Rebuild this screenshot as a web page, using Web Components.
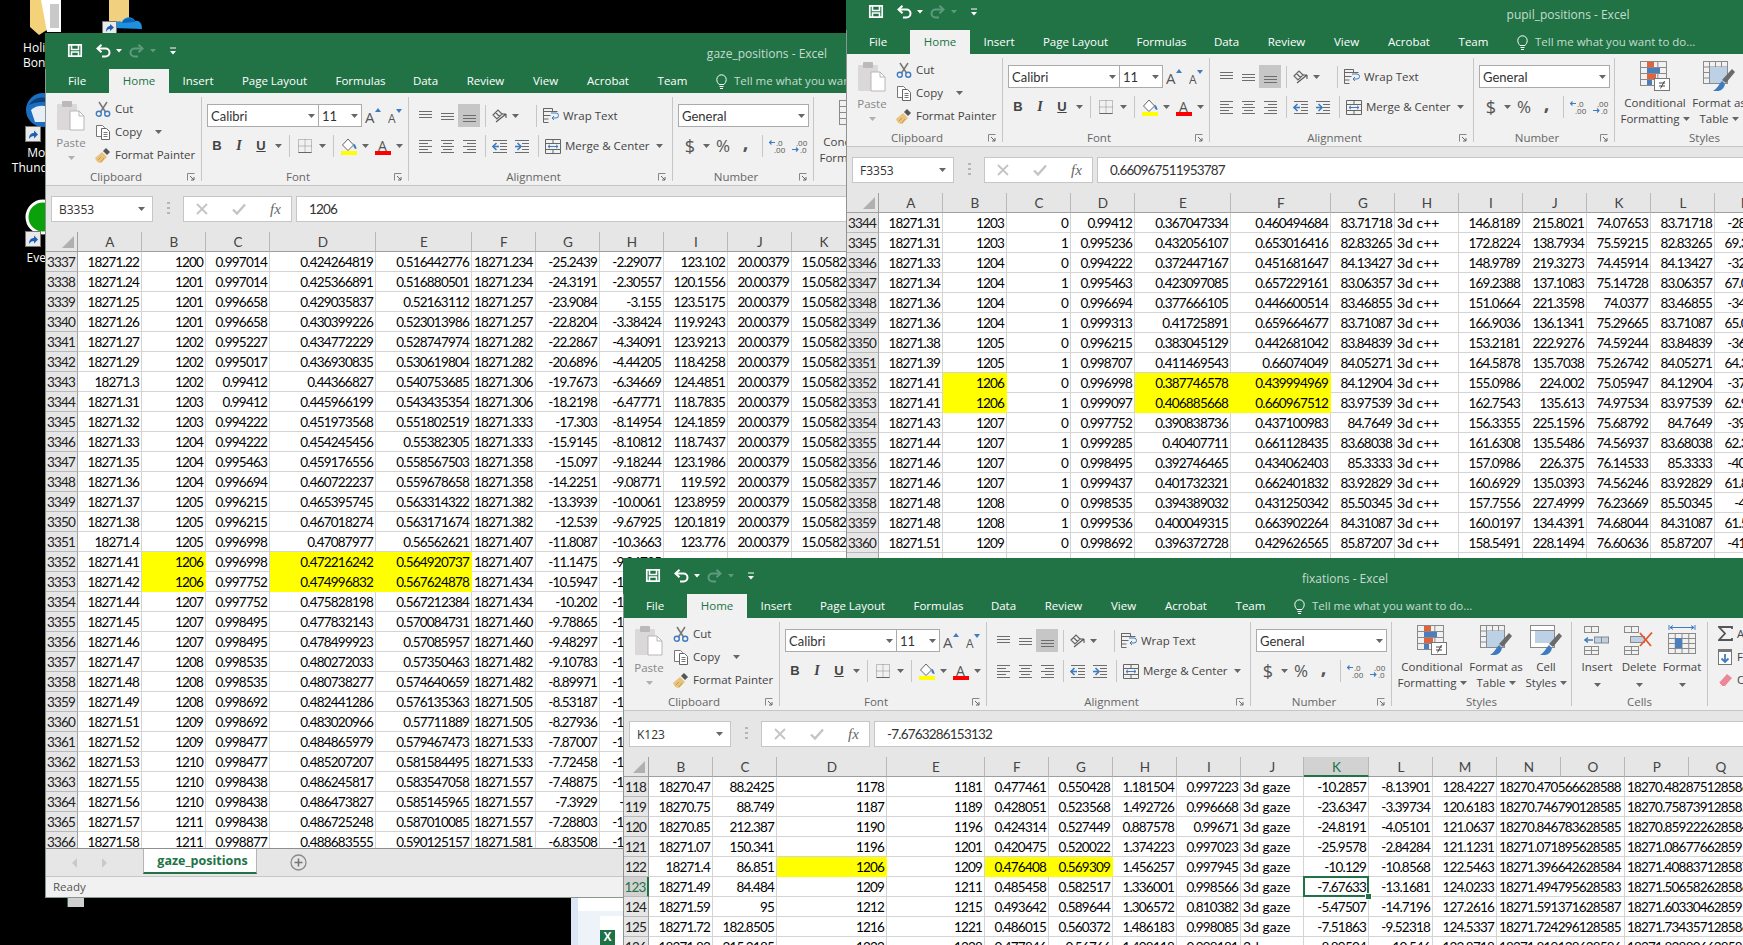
<!DOCTYPE html>
<html>
<head>
<meta charset="utf-8">
<title>Excel windows</title>
<style>
  html, body { margin: 0; height: 945px; overflow: hidden; background: #000; }
</style>
</head>
<body>
<desk-icon style="left:9px;top:0" kind="folder" label="Holidays|Bonuses"></desk-icon>
<desk-icon style="left:96px;top:0" kind="onedrive" label=""></desk-icon>
<desk-icon style="left:9px;top:93px" kind="bird" label="Mozilla|Thunderbird"></desk-icon>
<desk-icon style="left:9px;top:198px" kind="green" label="Everest"></desk-icon>
<desk-stub></desk-stub>
<desk-sliver></desk-sliver>

<xl-window style="left:45px;top:33px;height:865px" doc="gaze_positions" name="B3353" formula="1206" sheet-tab="gaze_positions">
  <xl-sheet slot="sheet" src="gaze"></xl-sheet>
</xl-window>
<xl-window style="left:846px;top:-6px;height:576px" doc="pupil_positions" name="F3353" formula="0.660967511953787">
  <xl-sheet slot="sheet" src="pupil"></xl-sheet>
</xl-window>
<xl-window style="left:623px;top:558px;height:400px" doc="fixations" name="K123" formula="-7.6763286153132">
  <xl-sheet slot="sheet" src="fix"></xl-sheet>
</xl-window>

<script>
const UI_FONT = `"Open Sans", "Noto Sans", sans-serif`
const CELL_FONT = `Lato, "Liberation Sans", sans-serif`
const GREY = '#6d6d6d'
const BLUE = '#3f7cbf'

const svg = (w, h, body) => `<svg width="${w}" height="${h}" viewBox="0 0 ${w} ${h}" fill="none">${body}</svg>`
const lines = (rows, x1, x2) => rows.map(r => `<path d="M${r[1] ?? x1} ${r[0]}H${r[2] ?? x2}" stroke="${GREY}"/>`).join('')
const grid = (x, y, w, h, nx, ny, c = '#8a8a8a') => {
  let s = `<rect x="${x + .5}" y="${y + .5}" width="${w}" height="${h}" stroke="${c}"/>`
  for (let i = 1; i < nx; i++) s += `<path d="M${x + .5 + i * w / nx} ${y}v${h}" stroke="${c}"/>`
  for (let i = 1; i < ny; i++) s += `<path d="M${x} ${y + .5 + i * h / ny}h${w}" stroke="${c}"/>`
  return s
}
const brush = `<path d="M29 8l3 3-9 11-4-3z" fill="#6a6a6a"/><path d="M19 20l3 3c-1 6-6 8-12 7 4-2 6-7 9-10z" fill="#3f7cbf"/>`

const ICONS = {
  save: svg(16, 15, `<path d="M1.8 1.8h12.4v11.4H1.8z" stroke="#fff" stroke-width="1.7"/><path d="M4.5 1.5v5h7v-5M4.5 13.5v-4.5h7v4.5" stroke="#fff" stroke-width="1.6"/>`),
  undo: svg(16, 14, `<path d="M3 4.5h7.5a4 4 0 0 1 0 8H7" stroke="#fff" stroke-width="2"/><path d="M6.5 .8L2.5 4.5l4 3.8" stroke="#fff" stroke-width="2"/>`),
  redo: svg(16, 14, `<path d="M13 4.5H5.5a4 4 0 0 0 0 8H9" stroke="#5f9a7c" stroke-width="2"/><path d="M9.5 .8l4 3.7-4 3.8" stroke="#5f9a7c" stroke-width="2"/>`),
  qat: svg(8, 8, `<path d="M1 1h6" stroke="#fff"/><path d="M1 4h6l-3 3.5z" fill="#fff"/>`),
  caretW: svg(7, 4, `<path d="M0 0h6l-3 3.5z" fill="#fff"/>`),
  caretD: svg(7, 4, `<path d="M0 0h6l-3 3.5z" fill="#5f9a7c"/>`),
  caret: svg(7, 4, `<path d="M0 0h7l-3.5 4z" fill="#666"/>`),
  caretL: svg(7, 4, `<path d="M0 0h7l-3.5 4z" fill="#b0b0b0"/>`),
  paste: svg(30, 31, `<rect x="1" y="4" width="20" height="26" rx="1" fill="#dad8d8"/><rect x="6" y="1" width="10" height="6" rx="1" fill="#bdb9b9"/><path d="M14 11h9l5 5v14H14z" fill="#fff" stroke="#b9b5b5"/><path d="M23 11v5h5" stroke="#b9b5b5"/>`),
  cut: svg(16, 16, `<path d="M4 1l6.5 10M12 1L5.5 11" stroke="#777" stroke-width="1.5"/><circle cx="3.8" cy="12.8" r="2.5" stroke="${BLUE}" stroke-width="1.4"/><circle cx="12.2" cy="12.8" r="2.5" stroke="${BLUE}" stroke-width="1.4"/>`),
  copy: svg(16, 16, `<path d="M1.500 1.500h6l2 2v9h-8z" fill="#fff" stroke="#777"/><path d="M6.500 4.500h5l3 3v8h-8z" fill="#fff" stroke="#666"/><path d="M8.500 8.500h4M8.500 10.500h4M8.500 12.500h4" stroke="#777"/>`),
  painter: svg(18, 16, `<path d="M1 11l7-6 5 5-6 6c-3 0-5-2-6-5z" fill="#e9c27b"/><path d="M9 4l3-3 4 4-3 3z" fill="#555"/><path d="M4 13l3-3M7 15l3-4" stroke="#c19a50"/>`),
  grow: svg(17, 17, `<text x="0" y="16" font-family="Open Sans" font-size="15" fill="#555">A</text><path d="M10 5l3-4 3 4z" fill="${BLUE}"/>`),
  shrink: svg(15, 16, `<text x="0" y="15" font-family="Open Sans" font-size="12" fill="#555">A</text><path d="M8 1h6l-3 4z" fill="${BLUE}"/>`),
  border: svg(14, 14, `<path d="M.5.5h13v13H.5zM7 .5v13M.5 7h13" stroke="#888" stroke-dasharray="1 1"/><path d="M.5 13.500h13" stroke="#666"/>`),
  fill: svg(17, 17, `<path d="M7 1L1.500 7l5.500 5.500L12.500 7z" fill="#fff" stroke="#666"/><path d="M12.500 5.500c2 1 3 3.500 3 5.500-2 0-3-1.500-3-3z" fill="${BLUE}"/><rect x="0" y="13" width="16" height="4" fill="#ff0"/>`),
  color: svg(17, 17, `<text x="3" y="12.5" font-family="Open Sans" font-size="14" fill="#555">A</text><rect x="0" y="13" width="16" height="4" fill="#f00"/>`),
  aTop: svg(15, 14, lines([[2.5], [5.5], [8.5]], 1, 14)),
  aMid: svg(15, 14, lines([[4.5], [7.5], [10.5]], 1, 14)),
  aBot: svg(15, 14, lines([[6.5], [9.5], [12.5]], 1, 14)),
  aLeft: svg(15, 14, lines([[1.5], [4.5, 1, 10], [7.5], [10.5, 1, 10], [13.5]], 1, 14)),
  aCenter: svg(15, 14, lines([[1.5], [4.5, 3, 12], [7.5], [10.5, 3, 12], [13.5]], 1, 14)),
  aRight: svg(15, 14, lines([[1.5], [4.5, 5, 14], [7.5], [10.5, 5, 14], [13.5]], 1, 14)),
  orient: svg(17, 15, `<path d="M2 7l5-5 4 4-5 5zM4.500 4.500l4 4" stroke="#666" stroke-width="1.200"/><path d="M5 14l10-8M15 6v4M15 6h-4" stroke="#555" stroke-width="1.100"/>`),
  indentL: svg(16, 14, `${lines([[1.5], [4.5, 8, 15], [7.5, 8, 15], [10.5, 8, 15], [13.5]], 1, 15)}<path d="M1 7.500h6" stroke="${BLUE}" stroke-width="1.600"/><path d="M4.500 4L1 7.500 4.500 11" stroke="${BLUE}" stroke-width="1.600"/>`),
  indentR: svg(16, 14, `${lines([[1.5], [4.5, 8, 15], [7.5, 8, 15], [10.5, 8, 15], [13.5]], 1, 15)}<path d="M1 7.500h6" stroke="${BLUE}" stroke-width="1.600"/><path d="M3.500 4L7 7.500 3.500 11" stroke="${BLUE}" stroke-width="1.600"/>`),
  wrap: svg(16, 15, `<path d="M.5.5h9v3h-9zM.5 3.500h14M.5 7.500h7M.5 11h5M.5 14.500h5M.5.5v14" stroke="#666"/><path d="M9 10h4a2 2 0 0 0 0-5H8" stroke="${BLUE}"/><path d="M11 8l-2 2 2 2" stroke="${BLUE}"/>`),
  merge: svg(16, 15, `<path d="M.5.5h15v14H.5zM.5 4.500h15M.5 10.500h15M8 .5v4M8 10.500v4" stroke="#666"/><path d="M3 7.500h10M5 5.800L3 7.500l2 1.700M11 5.800l2 1.700-2 1.700" stroke="${BLUE}"/>`),
  incDec: svg(18, 14, `<text x="7" y="6.5" font-family="Open Sans" font-size="8" fill="#555">.0</text><text x="5" y="13.5" font-family="Open Sans" font-size="8" fill="#555">.00</text><path d="M0 3.500h6M2.500 1.500L.5 3.500l2 2" stroke="${BLUE}" stroke-width="1.100"/>`),
  decDec: svg(18, 14, `<text x="5" y="6.5" font-family="Open Sans" font-size="8" fill="#555">.00</text><text x="9" y="13.5" font-family="Open Sans" font-size="8" fill="#555">.0</text><path d="M1 10.500h6M5 8.500l2 2-2 2" stroke="${BLUE}" stroke-width="1.100"/>`),
  cond: svg(30, 30, `${grid(0, 0, 26, 24, 3, 4)}<rect x="7" y="1" width="7" height="5" fill="#e0633c"/><rect x="7" y="7" width="13" height="5" fill="#4a7fbc"/><rect x="7" y="13" width="9" height="5" fill="#e0633c"/><rect x="7" y="19" width="5" height="5" fill="#4a7fbc"/><rect x="14.5" y="17.5" width="15" height="12" fill="#fff" stroke="#777"/><path d="M19 22h6M19 25h6M24.500 20l-4 7.500" stroke="#444"/>`),
  table: svg(33, 30, `${grid(0, 0, 24, 22, 4, 4)}<rect x="7" y="6" width="17" height="16" fill="#bcd0e6"/>${brush}`),
  cell: svg(33, 30, `<rect x=".5" y=".5" width="24" height="22" stroke="#8a8a8a" fill="#fff"/><path d="M0 5.500h24" stroke="#8a8a8a"/><rect x="5" y="6" width="19" height="12" fill="#bcd0e6"/>${brush}`),
  insert: svg(28, 30, `${grid(1, 1, 14, 6, 2, 1)}<rect x="11.5" y="12" width="14" height="6" fill="#bcd0e6" stroke="#8a8a8a"/><path d="M18.500 12v6" stroke="#8a8a8a"/><path d="M2 15h8M5 12.500L2 15l3 2.500" stroke="${BLUE}" stroke-width="1.600"/>${grid(1, 21, 14, 8, 2, 2)}`),
  del: svg(30, 30, `${grid(0, 1, 14, 6, 2, 1)}<rect x="6.5" y="11.5" width="14" height="6" fill="#bcd0e6" stroke="#8a8a8a"/><path d="M16 8l11 13M28 7.500L16 21" stroke="#e4572e" stroke-width="1.800"/>${grid(0, 21, 14, 8, 2, 2)}`),
  format: svg(28, 30, `<path d="M1 0v5M27 0v5M2 2.500h24M5 .5L2 2.500l3 2M23 .5l3 2-3 2" stroke="${BLUE}"/>${grid(0, 8, 27, 20, 4, 4)}<rect x="7" y="13" width="7" height="10" fill="#4a7fbc"/>`),
  sigma: svg(15, 15, `<path d="M14 3V1H1l6 6.500L1 14h13v-2" stroke="#555" stroke-width="1.800"/>`),
  fillDown: svg(14, 16, `<rect x=".5" y=".5" width="13" height="15" fill="#fff" stroke="#777"/><rect x="0" y="0" width="14" height="3" fill="#777"/><path d="M7 5v8M3.500 9.500L7 13l3.500-3.500" stroke="${BLUE}" stroke-width="1.800"/>`),
  eraser: svg(14, 14, `<path d="M1 10l8-9 5 4-7 8H3z" fill="#ec8795"/><path d="M1 10l3 3" stroke="#fff"/>`),
  launch: svg(8, 8, `<path d="M.5 .5h7M.5 .5v7" stroke="#888"/><path d="M3 3l4 4M7 4v3H4" stroke="#666"/>`),
  bulb: svg(11, 15, `<path d="M3 10.500C2 9 .8 8 .8 5.500a4.700 4.700 0 0 1 9.400 0c0 2.500-1.200 3.500-2.200 5zM3.500 12.500h4M4 14.500h3" stroke="#fff"/>`),
  check: svg(14, 12, `<path d="M1 6.500L5 10.500 13 1.500" stroke="#c4c4c4" stroke-width="2.400"/>`),
  cross: svg(12, 12, `<path d="M1 1l10 10M11 1L1 11" stroke="#c4c4c4" stroke-width="1.800"/>`),
  dots: svg(3, 14, `<path d="M0 1h3M0 6h3M0 11h3" stroke="#b5b5b5" stroke-width="2"/>`),
  plus: svg(17, 17, `<circle cx="8.5" cy="8.5" r="7.5" stroke="#8a8a8a" stroke-width="1.300"/><path d="M8.500 4.500v8M4.500 8.500h8" stroke="#777" stroke-width="1.600"/>`),
  prev: svg(6, 10, `<path d="M5 0v10L0 5z" fill="#c9c9c9"/>`),
  next: svg(6, 10, `<path d="M1 0v10l5-5z" fill="#c9c9c9"/>`),
  corner: svg(14, 14, `<path d="M13 1v12H1z" fill="#b0b0b0"/>`)
}

// each group of the ribbon is one flex column: a body and a caption row
const ribbonTemplate = document.createElement('template')
ribbonTemplate.innerHTML = /* HTML */`
<style>
  :host { display: flex; height: 92px; background: #f1f1f1; color: #444; font: 11.5px/16px ${UI_FONT}; flex: none; }
  .group { box-sizing: border-box; flex: none; height: 84px; margin-top: 4px; display: flex; flex-direction: column; border-right: 1px solid #c6c6c6; }
  .group:last-child { border: 0; }
  .body { height: 72px; flex: none; box-sizing: border-box; }
  .cap { height: 16px; display: flex; align-items: center; color: #666; }
  .cap span { flex: 1; text-align: center; }
  .cap b { width: 14px; height: 8px; display: flex; font-weight: normal; }
  .cap b svg { display: block; }
  .rows { display: flex; flex-direction: column; gap: 8px; padding-top: 7px; }
  .row { display: flex; align-items: center; height: 22px; }
  .row.top { height: 23px; }
  .i { display: flex; align-items: center; justify-content: center; flex: none; height: 22px; width: 22px; }
  .c { display: flex; align-items: center; justify-content: center; flex: none; height: 22px; }
  .sep { width: 1px; height: 22px; background: #c6c6c6; flex: none; }
  .on { background: #c6c6c6; height: 23px; }
  .box { box-sizing: border-box; height: 23px; background: #fff; border: 1px solid #ababab; display: flex; align-items: center; justify-content: space-between; padding: 0 3px; color: #333; flex: none; font: 13px ${CELL_FONT}; }
  .t { font-weight: 700; font-size: 13px; font-family: "Liberation Sans", sans-serif; color: #444; }
  .clip { display: flex; }
  .paste { width: 49px; flex: none; display: flex; flex-direction: column; align-items: center; padding: 3px 0 0 3px; box-sizing: border-box; color: #888; }
  .paste svg { display: block; }
  .paste span { margin-top: 4px; line-height: 16px; }
  .paste i { display: block; margin-top: 5px; }
  .small { display: grid; grid-template-rows: repeat(3, 23px); }
  .small div { display: flex; align-items: center; }
  .small u { text-decoration: none; width: 18px; flex: none; display: flex; justify-content: center; margin-right: 3px; }
  .small em { font-style: normal; }
  .big { display: flex; }
  .btn { flex: none; display: flex; flex-direction: column; align-items: center; padding-top: 3px; box-sizing: border-box; white-space: nowrap; text-align: center; }
  .btn > svg { height: 30px; display: block; }
  .btn span { line-height: 15.7px; margin-top: 4px; }
  .btn span + span { margin-top: 0; }
  .btn i { font-style: normal; display: inline-block; vertical-align: 2px; margin-left: 3px; }
  .btn i svg { display: block; }
  .num { font-size: 18px; font-family: "Open Sans", sans-serif; color: #555; }
</style>
<div class="group" style="width:157px">
  <div class="body clip">
    <div class="paste">${ICONS.paste}<span>Paste</span><i>${ICONS.caretL}</i></div>
    <div class="small">
      <div><u>${ICONS.cut}</u><em>Cut</em></div>
      <div><u>${ICONS.copy}</u><em>Copy</em><span style="margin-left:13px;display:flex">${ICONS.caret}</span></div>
      <div><u>${ICONS.painter}</u><em>Format Painter</em></div>
    </div>
  </div>
  <div class="cap"><span>Clipboard</span><b>${ICONS.launch}</b></div>
</div>
<div class="group" style="width:207px">
  <div class="body rows">
    <div class="row top" style="padding-left:5px">
      <div class="box" style="width:112px"><span>Calibri</span>${ICONS.caret}</div>
      <div class="box" style="width:44px;margin-left:-1px"><span>11</span>${ICONS.caret}</div>
      <div class="i">${ICONS.grow}</div>
      <div class="i">${ICONS.shrink}</div>
    </div>
    <div class="row" style="padding-left:4px">
      <div class="i t">B</div>
      <div class="i t" style="font-style:italic;font-family:'Liberation Serif',serif;font-size:14px">I</div>
      <div class="i t" style="text-decoration:underline">U</div>
      <div class="c" style="width:13px">${ICONS.caret}</div>
      <div class="sep" style="margin:0 4px"></div>
      <div class="i">${ICONS.border}</div>
      <div class="c" style="width:12px">${ICONS.caret}</div>
      <div class="sep" style="margin:0 4px 0 5px"></div>
      <div class="i">${ICONS.fill}</div>
      <div class="c" style="width:10px">${ICONS.caret}</div>
      <div class="i" style="margin-left:2px">${ICONS.color}</div>
      <div class="c" style="width:11px">${ICONS.caret}</div>
    </div>
  </div>
  <div class="cap"><span>Font</span><b>${ICONS.launch}</b></div>
</div>
<div class="group" style="width:264px">
  <div class="body rows">
    <div class="row top" style="padding-left:5px">
      <div class="i">${ICONS.aTop}</div><div class="i">${ICONS.aMid}</div><div class="i on">${ICONS.aBot}</div>
      <div class="sep" style="margin:0 2px 0 5px"></div>
      <div class="i">${ICONS.orient}</div><div class="c" style="width:10px">${ICONS.caret}</div>
      <div class="sep" style="margin:0 6px 0 16px"></div>
      <div class="i" style="width:16px">${ICONS.wrap}</div>
      <span style="margin-left:4px">Wrap Text</span>
    </div>
    <div class="row" style="padding-left:5px">
      <div class="i">${ICONS.aLeft}</div><div class="i">${ICONS.aCenter}</div><div class="i">${ICONS.aRight}</div>
      <div class="sep" style="margin:0 3px 0 5px"></div>
      <div class="i">${ICONS.indentL}</div><div class="i">${ICONS.indentR}</div>
      <div class="sep" style="margin:0 6px 0 5px"></div>
      <div class="i" style="width:16px">${ICONS.merge}</div>
      <span style="margin-left:4px;width:91px;flex:none">Merge &amp; Center</span>
      <div class="c">${ICONS.caret}</div>
    </div>
  </div>
  <div class="cap"><span>Alignment</span><b>${ICONS.launch}</b></div>
</div>
<div class="group" style="width:141px">
  <div class="body rows">
    <div class="row top" style="padding-left:5px"><div class="box" style="width:131px"><span>General</span>${ICONS.caret}</div></div>
    <div class="row" style="padding-left:6px">
      <div class="i num">$</div>
      <div class="c" style="width:10px">${ICONS.caret}</div>
      <div class="i num" style="font-size:17px;width:24px">%</div>
      <div class="i num" style="width:21px;font-weight:700;font-size:20px;padding-bottom:9px;box-sizing:border-box">,</div>
      <div class="sep" style="margin:0 4px 0 6px"></div>
      <div class="i" style="width:22px">${ICONS.incDec}</div>
      <div class="i" style="width:22px">${ICONS.decDec}</div>
    </div>
  </div>
  <div class="cap"><span>Number</span><b>${ICONS.launch}</b></div>
</div>
<div class="group" style="width:180px">
  <div class="body big">
    <div class="btn" style="width:80px">${ICONS.cond}<span>Conditional</span><span>Formatting<i>${ICONS.caret}</i></span></div>
    <div class="btn" style="width:48px">${ICONS.table}<span>Format as</span><span>Table<i>${ICONS.caret}</i></span></div>
    <div class="btn" style="width:52px">${ICONS.cell}<span>Cell</span><span>Styles<i>${ICONS.caret}</i></span></div>
  </div>
  <div class="cap"><span>Styles</span></div>
</div>
<div class="group" style="width:136px">
  <div class="body big">
    <div class="btn" style="width:50px">${ICONS.insert}<span>Insert</span><span>${ICONS.caret}</span></div>
    <div class="btn" style="width:34px">${ICONS.del}<span>Delete</span><span>${ICONS.caret}</span></div>
    <div class="btn" style="width:52px">${ICONS.format}<span>Format</span><span>${ICONS.caret}</span></div>
  </div>
  <div class="cap"><span>Cells</span></div>
</div>
<div class="group" style="width:120px;padding-left:8px">
  <div class="small">
    <div><u>${ICONS.sigma}</u><em>AutoSum</em></div>
    <div><u>${ICONS.fillDown}</u><em>Fill</em></div>
    <div><u>${ICONS.eraser}</u><em>Clear</em></div>
  </div>
</div>
`
class XlRibbon extends HTMLElement {
  constructor () {
    super()
    this.attachShadow({mode: 'open'})
    this.shadowRoot.appendChild(ribbonTemplate.content.cloneNode(true))
  }
}

const TABS = [['File', 64], ['Home', 60], ['Insert', 58], ['Page Layout', 95], ['Formulas', 77], ['Data', 53], ['Review', 67], ['View', 53], ['Acrobat', 72], ['Team', 57]]

const windowTemplate = document.createElement('template')
windowTemplate.innerHTML = /* HTML */`
<style>
  :host { position: absolute; display: flex; flex-direction: column; width: 1444px; background: #e6e6e6; outline: 1px solid #8b9690; outline-offset: -1px; overflow: hidden; }
  .title { height: 36px; flex: none; background: #217346; position: relative; display: flex; align-items: center; justify-content: center; color: #c5dccf; font: 12px ${UI_FONT}; padding-top: 4px; box-sizing: border-box; }
  .qat { position: absolute; left: 22px; top: 10px; display: flex; align-items: center; }
  .qat svg { display: block; }
  .tabs { height: 24px; flex: none; background: #217346; display: flex; color: #fff; font: 11.5px/24px ${UI_FONT}; }
  .tab { text-align: center; flex: none; }
  .tab.on { background: #f1f1f1; color: #217346; }
  .tell { margin-left: 15px; display: flex; align-items: center; gap: 7px; color: #c5dccf; }
  .bar { height: 47px; flex: none; background: #e6e6e6; border-top: 1px solid #c6c6c6; box-sizing: border-box; padding: 10px 0 0 6px; display: flex; }
  .fld { box-sizing: border-box; height: 26px; background: #fff; border: 1px solid #c6c6c6; display: flex; align-items: center; flex: none; color: #333; }
  .name { width: 102px; padding: 0 7px; justify-content: space-between; font: 12px ${UI_FONT}; }
  .dots { width: 30px; display: flex; align-items: center; justify-content: center; height: 26px; flex: none; }
  .fx { width: 109px; padding-left: 12px; gap: 24px; }
  .fx i { font: italic 15px "Liberation Serif", serif; color: #666; }
  .fml { flex: 1; margin-left: 4px; padding-left: 12px; font: 13.5px ${CELL_FONT}; letter-spacing: -.8px; }
  .sheet { flex: 1; min-height: 0; overflow: hidden; background: #fff; }
  .stabs { height: 29px; flex: none; background: #e6e6e6; border-top: 1px solid #8f8f8f; border-bottom: 1px solid #c6c6c6; box-sizing: border-box; display: flex; align-items: center; font: 700 12.5px ${UI_FONT}; padding-left: 27px; }
  .stabs svg { display: block; }
  .stab { height: 25px; width: 114px; margin-left: 36px; align-self: flex-start; box-sizing: border-box; background: #fff; border-bottom: 2px solid #217346; color: #217346; text-align: center; line-height: 23px; padding-left: 5px; border-left: 1px solid #b5b5b5; border-right: 1px solid #b5b5b5; }
  .status { height: 21px; flex: none; background: #f1f1f1; color: #555; font: 11.5px/20px ${UI_FONT}; padding-left: 8px; }
</style>
<div class="title">
  <div class="qat">
    ${ICONS.save}<span style="width:12px"></span>${ICONS.undo}<span style="width:5px"></span>${ICONS.caretW}
    <span style="width:6px"></span>${ICONS.redo}<span style="width:5px"></span>${ICONS.caretD}<span style="width:12px"></span>${ICONS.qat}
  </div>
  <span class="doc"></span>
</div>
<div class="tabs">
  ${TABS.map(([t, w]) => `<div class="tab${t === 'Home' ? ' on' : ''}" style="width:${w}px">${t}</div>`).join('')}
  <div class="tell">${ICONS.bulb}<span>Tell me what you want to do...</span></div>
</div>
<xl-ribbon></xl-ribbon>
<div class="bar">
  <div class="fld name"><span class="nm"></span>${ICONS.caret}</div>
  <div class="dots">${ICONS.dots}</div>
  <div class="fld fx">${ICONS.cross}${ICONS.check}<i>fx</i></div>
  <div class="fld fml"></div>
</div>
<div class="sheet"><slot name="sheet"></slot></div>
`
class XlWindow extends HTMLElement {
  constructor () {
    super()
    this.attachShadow({mode: 'open'})
    this.shadowRoot.appendChild(windowTemplate.content.cloneNode(true))
  }

  connectedCallback () {
    const root = this.shadowRoot
    root.querySelector('.doc').textContent = `${this.getAttribute('doc')} - Excel`
    root.querySelector('.nm').textContent = this.getAttribute('name')
    root.querySelector('.fml').textContent = this.getAttribute('formula')
    const tab = this.getAttribute('sheet-tab')
    if (tab) {
      const foot = document.createElement('template')
      foot.innerHTML = `
        <div class="stabs">${ICONS.prev}<span style="width:23px"></span>${ICONS.next}<div class="stab">${tab}</div><span style="width:33px"></span>${ICONS.plus}</div>
        <div class="status">Ready</div>`
      root.appendChild(foot.content)
    }
  }
}

const w = s => s.trim().split(/\s+/)
const SHEETS = {
  gaze: {
    first: 3337, head: 33,
    yellow: ['B3352', 'B3353', 'D3352', 'D3353', 'E3352', 'E3353'],
    cols: [
      ['A', 64, w('18271.22 18271.24 18271.25 18271.26 18271.27 18271.29 18271.3 18271.31 18271.32 18271.33 18271.35 18271.36 18271.37 18271.38 18271.4 18271.41 18271.42 18271.44 18271.45 18271.46 18271.47 18271.48 18271.49 18271.51 18271.52 18271.53 18271.55 18271.56 18271.57 18271.58')],
      ['B', 64, w('1200 1201 1201 1201 1202 1202 1202 1203 1203 1204 1204 1204 1205 1205 1205 1206 1206 1207 1207 1207 1208 1208 1208 1209 1209 1210 1210 1210 1211 1211')],
      ['C', 64, w('0.997014 0.997014 0.996658 0.996658 0.995227 0.995017 0.99412 0.99412 0.994222 0.994222 0.995463 0.996694 0.996215 0.996215 0.996998 0.996998 0.997752 0.997752 0.998495 0.998495 0.998535 0.998535 0.998692 0.998692 0.998477 0.998477 0.998438 0.998438 0.998438 0.998877')],
      ['D', 106, w('0.424264819 0.425366891 0.429035837 0.430399226 0.434772229 0.436930835 0.44366827 0.445966199 0.451973568 0.454245456 0.459176556 0.460722237 0.465395745 0.467018274 0.47087977 0.472216242 0.474996832 0.475828198 0.477832143 0.478499923 0.480272033 0.480738277 0.482441286 0.483020966 0.484865979 0.485207207 0.486245817 0.486473827 0.486725248 0.488683555')],
      ['E', 96, w('0.516442776 0.516880501 0.52163112 0.523013986 0.528747974 0.530619804 0.540753685 0.543435354 0.551802519 0.55382305 0.558567503 0.559678658 0.563314322 0.563171674 0.56562621 0.564920737 0.567624878 0.567212384 0.570084731 0.57085957 0.57350463 0.574640659 0.576135363 0.57711889 0.579467473 0.581584495 0.583547058 0.585145965 0.587010085 0.590125157')],
      ['F', 64, w('18271.234 18271.234 18271.257 18271.257 18271.282 18271.282 18271.306 18271.306 18271.333 18271.333 18271.358 18271.358 18271.382 18271.382 18271.407 18271.407 18271.434 18271.434 18271.460 18271.460 18271.482 18271.482 18271.505 18271.505 18271.533 18271.533 18271.557 18271.557 18271.557 18271.581'), 'l'],
      ['G', 64, w('-25.2439 -24.3191 -23.9084 -22.8204 -22.2867 -20.6896 -19.7673 -18.2198 -17.303 -15.9145 -15.097 -14.2251 -13.3939 -12.539 -11.8087 -11.1475 -10.5947 -10.202 -9.78865 -9.48297 -9.10783 -8.89971 -8.53187 -8.27936 -7.87007 -7.72458 -7.48875 -7.3929 -7.28803 -6.83508')],
      ['H', 64, w('-2.29077 -2.30557 -3.155 -3.38424 -4.34091 -4.44205 -6.34669 -6.47771 -8.14954 -8.10812 -9.18244 -9.08771 -10.0061 -9.67925 -10.3663 -9.84735 -10.4516 -10.8932 -11.2045 -11.8417 -12.1038 -12.5062 -12.9341 -13.0278 -13.4711 -13.8852 -14.0216 -14.391 -14.6532 -15.2207')],
      ['I', 64, w('123.102 120.1556 123.5175 119.9243 123.9213 118.4258 124.4851 118.7835 124.1859 118.7437 123.1986 119.592 123.8959 120.1819 123.776')],
      ['J', 64, Array(15).fill('20.00379')],
      ['K', 64, Array(15).fill('15.05827')]
    ]
  },
  pupil: {
    first: 3344, head: 33,
    yellow: ['B3352', 'B3353', 'E3352', 'E3353', 'F3352', 'F3353'],
    cols: [
      ['A', 64, w('18271.31 18271.31 18271.33 18271.34 18271.36 18271.36 18271.38 18271.39 18271.41 18271.41 18271.43 18271.44 18271.46 18271.46 18271.48 18271.48 18271.51')],
      ['B', 64, w('1203 1203 1204 1204 1204 1204 1205 1205 1206 1206 1207 1207 1207 1207 1208 1208 1209')],
      ['C', 64, w('0 1 0 1 0 1 0 1 0 1 0 1 0 1 0 1 0')],
      ['D', 64, w('0.99412 0.995236 0.994222 0.995463 0.996694 0.999313 0.996215 0.998707 0.996998 0.999097 0.997752 0.999285 0.998495 0.999437 0.998535 0.999536 0.998692')],
      ['E', 96, w('0.367047334 0.432056107 0.372447167 0.423097085 0.377666105 0.41725891 0.383045129 0.411469543 0.387746578 0.406885668 0.390838736 0.40407711 0.392746465 0.401732321 0.394389032 0.400049315 0.396372728')],
      ['F', 100, w('0.460494684 0.653016416 0.451681647 0.657229161 0.446600514 0.659664677 0.442681042 0.66074049 0.439994969 0.660967512 0.437100983 0.661128435 0.434062403 0.662401832 0.431250342 0.663902264 0.429626565')],
      ['G', 64, w('83.71718 82.83265 84.13427 83.06357 83.46855 83.71087 83.84839 84.05271 84.12904 83.97539 84.7649 83.68038 85.3333 83.92829 85.50345 84.31087 85.87207')],
      ['H', 64, Array(17).fill('3d c++'), 'l word'],
      ['I', 64, w('146.8189 172.8224 148.9789 169.2388 151.0664 166.9036 153.2181 164.5878 155.0986 162.7543 156.3355 161.6308 157.0986 160.6929 157.7556 160.0197 158.5491')],
      ['J', 64, w('215.8021 138.7934 219.3273 137.1083 221.3598 136.1341 222.9276 135.7038 224.002 135.613 225.1596 135.5486 226.375 135.0393 227.4999 134.4391 228.1494')],
      ['K', 64, w('74.07653 75.59215 74.45914 75.14728 74.0377 75.29665 74.59244 75.26742 75.05947 74.97534 75.68792 74.56937 76.14533 74.56246 76.23669 74.68044 76.60636')],
      ['L', 64, w('83.71718 82.83265 84.13427 83.06357 83.46855 83.71087 83.84839 84.05271 84.12904 83.97539 84.7649 83.68038 85.3333 83.92829 85.50345 84.31087 85.87207')],
      ['M', 64, w('-28.7415 69.38261 -32.1847 67.09312 -34.2561 65.01873 -36.1947 64.37218 -37.6142 62.94117 -39.0862 62.38429 -40.5176 61.80473 -41.272 61.53109 -41.8723')]
    ],
    blankRows: 1
  },
  fix: {
    first: 118, head: 26,
    yellow: ['D122', 'F122', 'G122'],
    sel: 'K123',
    cols: [
      ['B', 64, w('18270.47 18270.75 18270.85 18271.07 18271.4 18271.49 18271.59 18271.72 18271.83')],
      ['C', 64, w('88.2425 88.749 212.387 150.341 86.851 84.484 95 182.8505 215.3185')],
      ['D', 110, w('1178 1187 1190 1196 1206 1209 1212 1216 1222')],
      ['E', 98, w('1181 1189 1196 1201 1209 1211 1215 1221 1228')],
      ['F', 64, w('0.477461 0.428051 0.424314 0.420475 0.476408 0.485458 0.493642 0.486015 0.477846')],
      ['G', 64, w('0.550428 0.523568 0.527449 0.520022 0.569309 0.582517 0.589644 0.560372 0.56766')],
      ['H', 64, w('1.181504 1.492726 0.887578 1.374223 1.456257 1.336001 1.306572 1.486183 1.408118')],
      ['I', 64, w('0.997223 0.996668 0.99671 0.997023 0.997945 0.998566 0.810382 0.998085 0.998181')],
      ['J', 63, Array(9).fill('3d gaze'), 'l word'],
      ['K', 65, w('-10.2857 -23.6347 -24.8191 -25.9578 -10.129 -7.67633 -5.47507 -7.51863 -8.89504')],
      ['L', 64, w('-8.13901 -3.39734 -4.05101 -2.84284 -10.8568 -13.1681 -14.7196 -9.52318 -10.546')],
      ['M', 64, w('128.4227 120.6183 121.0637 121.1231 122.5463 124.0233 127.2616 124.5337 123.8718')],
      ['N', 64, w('18270.470566628588 18270.746790128585 18270.846783628585 18271.071895628585 18271.396642628584 18271.494795628583 18271.591371628587 18271.724296128585 18271.819138628586'), 'o'],
      ['O', 64, Array(9).fill('')],
      ['P', 64, w('18270.482875128586 18270.758739128585 18270.859222628584 18271.08677662859 18271.408837128587 18271.506582628586 18271.60330462859 18271.734357128586 18271.828806628585'), 'o'],
      ['Q', 64, Array(9).fill('')]
    ]
  }
}

class XlSheet extends HTMLElement {
  constructor () {
    super()
    this.attachShadow({mode: 'open'})
  }

  connectedCallback () {
    const s = SHEETS[this.getAttribute('src')]
    const rows = s.cols[0][2].length
    const selCol = s.sel ? s.sel[0] : ''
    const selRow = s.sel ? +s.sel.slice(1) : 0
    let html = `<div class="h corner">${ICONS.corner}</div>`
    for (const [name] of s.cols) html += `<div class="h${name === selCol ? ' hs' : ''}">${name}</div>`
    for (let r = 0; r < rows + (s.blankRows || 0); r++) {
      const num = s.first + r
      html += `<div class="h r${num === selRow ? ' rs' : ''}">${num}</div>`
      for (const [name, , vals, kind] of s.cols) {
        const id = name + num
        const cls = ['c', kind || '']
        if (s.yellow.includes(id)) cls.push('y')
        if (id === s.sel) cls.push('sel')
        html += `<div class="${cls.join(' ')}">${vals[r] ?? ''}</div>`
      }
    }
    this.shadowRoot.innerHTML = /* HTML */`
      <style>
        :host { display: block; }
        .g { display: grid; grid-template-columns: ${s.head}px ${s.cols.map(c => c[1] + 'px').join(' ')}; grid-auto-rows: 20px; width: max-content; font: 13.5px/20px ${CELL_FONT}; letter-spacing: -.8px; color: #000; background: #fff; }
        .g > div { box-sizing: border-box; white-space: nowrap; min-width: 0; }
        .h { background: #e6e6e6; color: #444; text-align: center; border-right: 1px solid #b9b9b9; border-bottom: 1px solid #9f9f9f; overflow: hidden; }
        .corner { display: flex; justify-content: flex-end; align-items: flex-end; border-right-color: #9f9f9f; padding: 0 2px 2px 0; }
        .corner svg { display: block; }
        .r { border-right-color: #9f9f9f; border-bottom-color: #b9b9b9; color: #222; padding-left: 0; }
        .hs { background: #d2d2d2; color: #217346; border-bottom: 2px solid #217346; }
        .rs { background: #d2d2d2; color: #217346; border-right: 2px solid #217346; }
        .c { border-right: 1px solid #d4d4d4; border-bottom: 1px solid #d4d4d4; padding: 0 2px; text-align: right; overflow: hidden; }
        .l { text-align: left; }
        .word { letter-spacing: 0; font-size: 14px; }
        .o { text-align: left; overflow: visible; border-right-color: transparent; }
        .y { background: #ff0; border-color: #ff0; }
        .sel { position: relative; overflow: visible; }
        .sel::after { content: ""; position: absolute; left: -1px; top: -1px; right: -1px; bottom: -1px; border: 2px solid #217346; }
        .sel::before { content: ""; position: absolute; right: -4px; bottom: -4px; width: 5px; height: 5px; background: #217346; border: 1px solid #fff; z-index: 1; }
      </style>
      <div class="g">${html}</div>`
  }
}

const deskTemplate = document.createElement('template')
deskTemplate.innerHTML = /* HTML */`
<style>
  :host { position: absolute; display: block; width: 76px; height: 100px; color: #fff; font: 12px/15px ${UI_FONT}; text-align: center; }
  .art { position: absolute; left: 0; top: 0; }
  .label { position: absolute; left: 0; right: 0; text-shadow: 0 0 2px #000; }
</style>
<div class="art"></div>
<div class="label"></div>
`
const DESK_ART = {
  folder: {art: svg(76, 40, `<path d="M21 0h20v28L30 35 21 27z" fill="#f3d27a"/><path d="M32 0h20v32H38z" fill="#fff"/><rect x="41" y="4" width="9" height="24" fill="#c9c9c9"/>`), labelTop: 40},
  onedrive: {art: svg(60, 40, `<path d="M13 0h20v22H13z" fill="#f1d080"/><path d="M17 28c0-5 5-8 9-6 2-6 11-6 13-1 5-1 7 3 7 8z" fill="#1f8fe0"/><path d="M26 23c2-6 11-6 13-1" fill="#0c62b8"/><rect x="6.500" y="21.500" width="14" height="12" fill="#e9e9e9" stroke="#777"/><path d="M10 32c0-4 2-6 4-6v-2l4 3.500-4 3.500v-2c-2 0-3 1-4 3z" fill="#1c5fb5"/>`), labelTop: 40},
  bird: {art: svg(76, 50, `<circle cx="34" cy="17" r="17" fill="#1c6fc0"/><path d="M22 17c6-6 18-6 26 2l-7 10H26z" fill="#e8eef5"/><path d="M20 12c6-10 20-10 28 0-8-4-20-4-28 0z" fill="#0e3f7a"/><rect x="16.500" y="33.500" width="15" height="15" fill="#e9e9e9" stroke="#777"/><path d="M20 46c0-4 2-6 5-6v-2.500l4 4-4 4V43c-2 0-4 1-5 3z" fill="#1c5fb5"/>`), labelTop: 52},
  green: {art: svg(76, 50, `<circle cx="34" cy="19" r="16" fill="#0aa10a" stroke="#fff" stroke-width="3"/><rect x="16.500" y="33.500" width="15" height="15" fill="#e9e9e9" stroke="#777"/><path d="M20 46c0-4 2-6 5-6v-2.500l4 4-4 4V43c-2 0-4 1-5 3z" fill="#1c5fb5"/>`), labelTop: 52}
}
class DeskIcon extends HTMLElement {
  constructor () {
    super()
    this.attachShadow({mode: 'open'})
    this.shadowRoot.appendChild(deskTemplate.content.cloneNode(true))
  }

  connectedCallback () {
    const kind = DESK_ART[this.getAttribute('kind')]
    this.shadowRoot.querySelector('.art').innerHTML = kind.art
    const label = this.shadowRoot.querySelector('.label')
    label.style.top = kind.labelTop + 'px'
    label.innerHTML = (this.getAttribute('label') || '').split('|').join('<br>')
  }
}

// what shows of the window lying behind, under the first workbook
const sliverTemplate = document.createElement('template')
sliverTemplate.innerHTML = /* HTML */`
<style>
  :host { position: absolute; left: 571px; top: 898px; width: 60px; height: 47px; background: #fff; display: flex; }
  .edge { width: 7px; background: #dbe7f5; }
  .in { flex: 1; display: flex; flex-direction: column; }
  .white { height: 13px; background: #fff; }
  .tint { flex: 1; background: #eef3fa; padding: 5px 0 0 22px; }
  .doc { background: #fff; height: 100%; position: relative; }
  .x { position: absolute; left: 0; bottom: 0; width: 15px; height: 15px; background: #1e7145; color: #fff; font: 700 12px/15px "Liberation Sans", sans-serif; text-align: center; }
</style>
<div class="edge"></div>
<div class="in"><div class="white"></div><div class="tint"><div class="doc"><div class="x">X</div></div></div></div>
`
class DeskSliver extends HTMLElement {
  constructor () {
    super()
    this.attachShadow({mode: 'open'})
    this.shadowRoot.appendChild(sliverTemplate.content.cloneNode(true))
  }
}

class DeskStub extends HTMLElement {
  constructor () {
    super()
    this.attachShadow({mode: 'open'}).innerHTML = `<style>:host { position: absolute; left: 67px; top: 898px; width: 17px; height: 9px; box-sizing: border-box; background: #cfcfcf; border-left: 1px solid #217346; }</style>`
  }
}

customElements.define('xl-ribbon', XlRibbon)
customElements.define('xl-sheet', XlSheet)
customElements.define('xl-window', XlWindow)
customElements.define('desk-icon', DeskIcon)
customElements.define('desk-sliver', DeskSliver)
customElements.define('desk-stub', DeskStub)
</script>
</body>
</html>
